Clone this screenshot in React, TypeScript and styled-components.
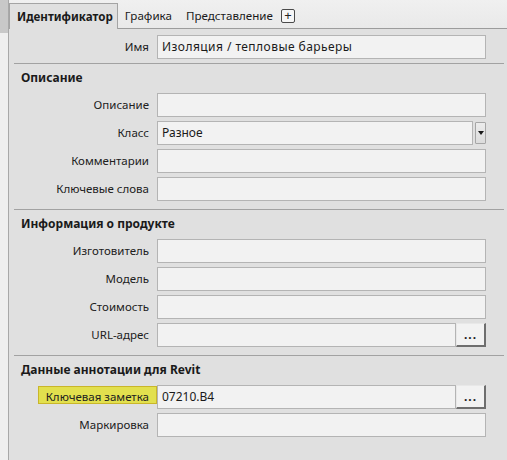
import styled, { createGlobalStyle } from "styled-components";

const GlobalStyle = createGlobalStyle`
  html, body {
    margin: 0;
    padding: 0;
    background: #e0e0e0;
  }
  body {
    font-family: "Noto Sans", "Open Sans", sans-serif;
    font-size: 12px;
    color: #1e1e1e;
  }
`;

const Window = styled.div`
  display: flex;
  width: 507px;
  height: 460px;
  overflow: hidden;
  background: #e0e0e0;
`;

const SideStrip = styled.div`
  width: 8px;
  flex: none;
  border-right: 1px solid #a8a8a8;
  background: linear-gradient(to bottom, #c8c8c8 0, #c8c8c8 33px, #efefef 33px);
`;

const Main = styled.div`
  flex: 1;
  display: flex;
  flex-direction: column;
  min-width: 0;
`;

const TabBar = styled.div`
  display: flex;
  align-items: flex-end;
  height: 28px;
  border-bottom: 1px solid #9c9c9c;
  background: linear-gradient(to bottom, #f0f0f0, #e9e9e9);
`;

const Tab = styled.div<{ $active?: boolean }>`
  height: 25px;
  line-height: 25px;
  padding: ${(p) => (p.$active ? "0 4px 0 7px" : "0 7px")};
  font-size: 11.6px;
  font-weight: ${(p) => (p.$active ? 700 : 400)};
  color: #1a1a1a;
  box-sizing: border-box;
  ${(p) =>
    p.$active &&
    `
    background: #e0e0e0;
    border: 1px solid #a4a4a4;
    border-bottom: none;
    height: 26px;
    margin-bottom: -1px;
  `}
`;

const AddTab = styled.div`
  align-self: center;
  margin: 3px 0 0 1px;
  width: 14px;
  height: 14px;
  box-sizing: border-box;
  border: 1px solid #4a4a4a;
  border-radius: 2px;
  background: #f6f6f6;
  display: flex;
  align-items: center;
  justify-content: center;
  font-size: 13px;
  line-height: 1;
  color: #222;
`;

const Top = styled.div`
  padding: 6px 0 4px;
`;

const Section = styled.section`
  margin: 0 3px 0 5px;
  border-top: 1px solid #a2a2a2;
  padding: 6px 0 8px;
`;

const Heading = styled.div`
  height: 16px;
  line-height: 16px;
  font-weight: 700;
  padding-left: 7px;
  margin-bottom: 7px;
  color: #1a1a1a;
`;

const Rows = styled.div`
  display: flex;
  flex-direction: column;
  gap: 4px;
  margin: 0 -3px 0 -5px;
`;

const Row = styled.div`
  display: flex;
  align-items: center;
  height: 24px;
  padding-right: 21px;
`;

const Label = styled.div`
  width: 140px;
  height: 24px;
  line-height: 24px;
  flex: none;
  text-align: right;
  margin-right: 8px;
  white-space: nowrap;
  font-size: 11.5px;
  color: #202020;
`;

const Highlight = styled.span`
  display: inline-block;
  vertical-align: top;
  margin: 1px -8px 0 0;
  height: 18px;
  line-height: 20px;
  box-sizing: border-box;
  padding: 0 7px 0 7px;
  background: #e2e04e;
  border: 1px solid #c9b62a;
`;

const Field = styled.div<{ $spacing?: number }>`
  flex: 1;
  height: 24px;
  box-sizing: border-box;
  border: 1px solid #b4b4b4;
  background: #f2f2f2;
  padding: 0 4px;
  line-height: 22px;
  white-space: nowrap;
  overflow: hidden;
  letter-spacing: ${(p) => p.$spacing ?? 0}px;
  color: #1a1a1a;
`;

const Combo = styled.div`
  flex: 1;
  display: flex;
  align-items: center;
  gap: 2px;
`;

const DropButton = styled.div`
  width: 11px;
  height: 22px;
  box-sizing: border-box;
  border: 1px solid #a6a6a6;
  border-radius: 1px;
  background: linear-gradient(to bottom, #ececec, #dcdcdc);
  display: flex;
  align-items: center;
  justify-content: center;

  &::after {
    content: "";
    border-left: 3px solid transparent;
    border-right: 3px solid transparent;
    border-top: 4px solid #1a1a1a;
  }
`;

const Browse = styled.div`
  width: 30px;
  height: 24px;
  flex: none;
  box-sizing: border-box;
  border-top: 1px solid #e8e8e8;
  border-left: 1px solid #e8e8e8;
  border-right: 2px solid #6e6e6e;
  border-bottom: 2px solid #6e6e6e;
  background: #f2f2f2;
  text-align: center;
  line-height: 22px;
  font-weight: 700;
  letter-spacing: 1px;
  color: #1a1a1a;
`;

type FieldDef = {
  label: string;
  value?: string;
  kind?: "combo" | "browse";
  highlight?: boolean;
};

const sections: { title: string; fields: FieldDef[] }[] = [
  {
    title: "Описание",
    fields: [
      { label: "Описание" },
      { label: "Класс", value: "Разное", kind: "combo" },
      { label: "Комментарии" },
      { label: "Ключевые слова" },
    ],
  },
  {
    title: "Информация о продукте",
    fields: [
      { label: "Изготовитель" },
      { label: "Модель" },
      { label: "Стоимость" },
      { label: "URL-адрес", kind: "browse" },
    ],
  },
  {
    title: "Данные аннотации для Revit",
    fields: [
      { label: "Ключевая заметка", value: "07210.B4", kind: "browse", highlight: true },
      { label: "Маркировка" },
    ],
  },
];

const FieldRow = ({ f }: { f: FieldDef }) => (
  <Row>
    <Label>{f.highlight ? <Highlight>{f.label}</Highlight> : f.label}</Label>
    {f.kind === "combo" ? (
      <Combo>
        <Field>{f.value}</Field>
        <DropButton />
      </Combo>
    ) : (
      <Field>{f.value}</Field>
    )}
    {f.kind === "browse" && <Browse>...</Browse>}
  </Row>
);

export default function App() {
  return (
    <>
      <GlobalStyle />
      <Window>
        <SideStrip />
        <Main>
          <TabBar>
            <Tab $active>Идентификатор</Tab>
            <Tab>Графика</Tab>
            <Tab>Представление</Tab>
            <AddTab>+</AddTab>
          </TabBar>
          <Top>
            <Row>
              <Label>Имя</Label>
              <Field $spacing={0.45}>Изоляция / тепловые барьеры</Field>
            </Row>
          </Top>
          {sections.map((s) => (
            <Section key={s.title}>
              <Heading>{s.title}</Heading>
              <Rows>
                {s.fields.map((f) => (
                  <FieldRow key={f.label} f={f} />
                ))}
              </Rows>
            </Section>
          ))}
        </Main>
      </Window>
    </>
  );
}
